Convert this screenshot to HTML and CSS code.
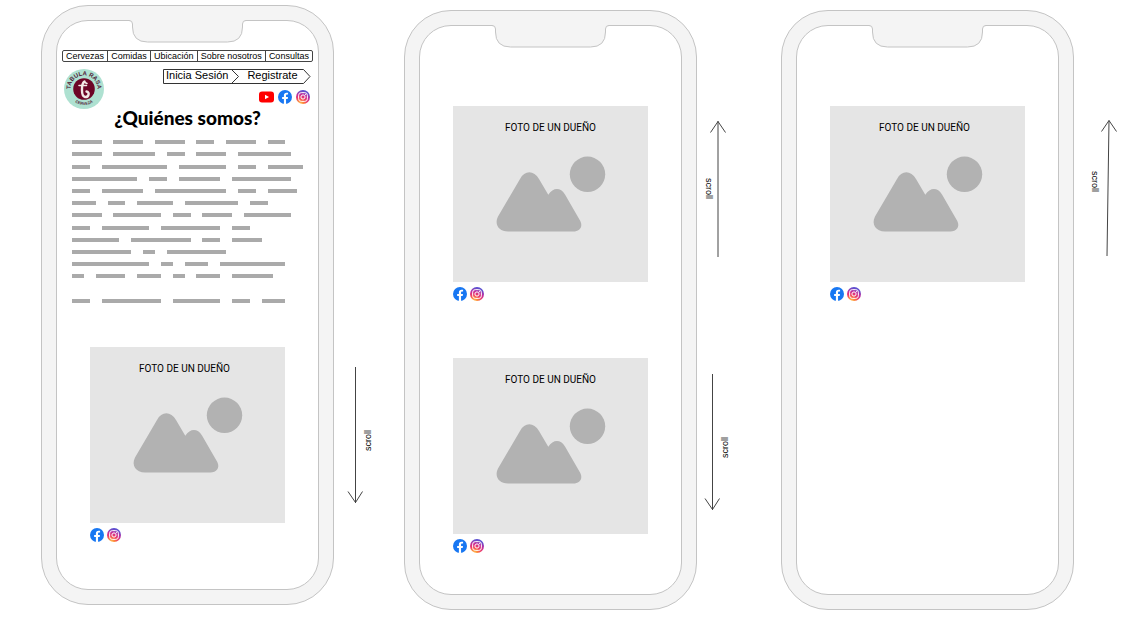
FILE: index.html
```html
<!DOCTYPE html>
<html lang="es">
<head>
<meta charset="utf-8">
<meta name="viewport" content="width=device-width, initial-scale=1">
<title>¿Quiénes somos? - Tabula Rasa</title>
<link rel="stylesheet" href="styles.css">
</head>
<body>
<svg class="sprite" aria-hidden="true">
  <defs>
    <radialGradient id="ig-warm" cx="0.3" cy="1.05" r="1">
      <stop offset="0" stop-color="#ffd860"/>
      <stop offset="0.25" stop-color="#fd8a3c"/>
      <stop offset="0.5" stop-color="#ee3b66"/>
      <stop offset="0.75" stop-color="#c32c9c"/>
      <stop offset="1" stop-color="#5b4fd0"/>
    </radialGradient>
    <symbol id="facebook" viewBox="0 0 24 24">
      <circle cx="12" cy="12" r="12" fill="#1877f2"/>
      <path fill="#fff" d="M10.1 24v-8.400H7.100V12h3V9.400c0-3 1.800-4.700 4.500-4.700 1.300 0 2.700.2 2.700.2v3h-1.500c-1.500 0-2 .9-2 1.900V12h3.300l-.5 3.600h-2.800V24z"/>
    </symbol>
    <symbol id="instagram" viewBox="0 0 24 24">
      <circle cx="12" cy="12" r="12" fill="url(#ig-warm)"/>
      <rect x="4.500" y="4.500" width="15" height="15" rx="4.500" fill="none" stroke="#fff" stroke-width="1.700"/>
      <circle cx="12" cy="12" r="3.600" fill="none" stroke="#fff" stroke-width="1.700"/>
      <circle cx="16.200" cy="7.900" r="1" fill="#fff"/>
    </symbol>
    <symbol id="youtube" viewBox="0 0 30 22">
      <rect width="30" height="22" rx="6" fill="#f00"/>
      <path fill="#fff" d="M12 6.500v9l8-4.500z"/>
    </symbol>
    <symbol id="notch" viewBox="0 0 117 23">
      <path fill="#f4f4f4" d="M0 0v.5q3.500 0 3.500 3.500v3q0 15 15 15h80q15 0 15-15V4q0-3.500 3.500-3.500V0z"/>
      <path fill="none" stroke="#c4c4c4" d="M0 .5q3.500 0 3.500 3.500v3q0 15 15 15h80q15 0 15-15V4q0-3.500 3.500-3.500"/>
    </symbol>
    <symbol id="landscape" viewBox="0 26 195 150">
      <circle cx="134.500" cy="68.300" r="17.700" fill="#b2b2b2"/>
      <path fill="#b2b2b2" d="M45 110.500 67 73C71.500 64 81 64 86 73l9.300 15.700C100 81.500 107.500 81 112 88.500l15.300 26.500c3 6-1 10.500-7 10.500H55c-9 0-14-7-10-15z"/>
    </symbol>
    <symbol id="arrow-up" viewBox="0 0 16 138">
      <path fill="none" stroke="#444" d="M8 1v136M.5 12.500 8 1.500l7.500 11"/>
    </symbol>
    <symbol id="arrow-down" viewBox="0 0 16 138">
      <path fill="none" stroke="#444" d="M8.500 1v136M1 125.500l7.500 11 7-11"/>
    </symbol>
    <symbol id="arrow-up-tilted" viewBox="0 0 16 138">
      <path fill="none" stroke="#444" d="M6 137 8 1.500M.5 12.500 8 1.500l7.500 11"/>
    </symbol>
  </defs>
</svg>

<main class="board">
  <section class="phone phone--first">
    <svg class="notch" aria-hidden="true"><use href="#notch"/></svg>
    <div class="screen">
      <nav class="menu" aria-label="Principal">
        <a href="#cervezas">Cervezas</a>
        <a href="#comidas">Comidas</a>
        <a href="#ubicacion">Ubicación</a>
        <a href="#nosotros">Sobre nosotros</a>
        <a href="#consultas">Consultas</a>
      </nav>
      <header class="header">
        <svg class="logo" viewBox="0 0 40 40" role="img" aria-label="Tabula Rasa Cerveza">
          <defs>
            <path id="logo-top" d="M7.500 25A13.500 13.500 0 1 1 32.500 25"/>
            <path id="logo-bottom" d="M5 25.500A16 16 0 0 0 35 25.500"/>
          </defs>
          <circle cx="20" cy="20" r="20" fill="#aee1d1"/>
          <circle cx="20" cy="20" r="10.800" fill="#6d0526"/>
          <text class="logo__name"><textPath href="#logo-top" startOffset="50%">TABULA RASA</textPath></text>
          <text class="logo__kind"><textPath href="#logo-bottom" startOffset="50%">CERVEZA</textPath></text>
          <path fill="none" stroke="#f3e9e6" stroke-width="2.400" stroke-linecap="round" d="M20.500 12.500c-3 2-2.500 6-2.500 9 0 4 1 6 3 6.500 4 .5 5-5 1.500-5.500"/>
          <path fill="none" stroke="#f3e9e6" stroke-width="1.600" stroke-linecap="round" d="M15 16.500h7.500M20 13l3 1.500"/>
        </svg>
        <div class="header__side">
          <div class="account">
            <svg class="account__frame" viewBox="0 0 148 15" aria-hidden="true">
              <path fill="none" stroke="#333" d="M.5.500H140.500L147 7.500l-6.500 7H.5zM68.500.500 75.500 7.500l-7 7"/>
            </svg>
            <a href="#sesion">Inicia Sesión</a>
            <a href="#registro">Registrate</a>
          </div>
          <div class="social">
            <a href="#youtube" aria-label="YouTube"><svg class="icon icon--wide"><use href="#youtube"/></svg></a>
            <a href="#facebook" aria-label="Facebook"><svg class="icon"><use href="#facebook"/></svg></a>
            <a href="#instagram" aria-label="Instagram"><svg class="icon"><use href="#instagram"/></svg></a>
          </div>
        </div>
      </header>
      <h1 class="title">¿Quiénes somos?</h1>
      <svg class="copy" viewBox="0 0 40 14" preserveAspectRatio="none" aria-hidden="true">
        <path d="M0 .5h5m2 0h5m2 0h5m2 0h3m2 0h5m2 0h3
          M0 1.500h5m2 0h7m2 0h3m2 0h5m2 0h9
          M0 2.500h3m2 0h11m2 0h8m2 0h3m2 0h6
          M0 3.500h11m2 0h3m2 0h7m2 0h10
          M0 4.500h3m2 0h7m2 0h12m2 0h3m2 0h5
          M0 5.500h4m2 0h3m2 0h6m2 0h9m2 0h3
          M0 6.500h5m2 0h8m2 0h3m2 0h5m2 0h8
          M0 7.500h3m2 0h8m2 0h10m2 0h3
          M0 8.500h8m2 0h10m2 0h3m2 0h5
          M0 9.500h10m2 0h2m2 0h10
          M0 10.500h13m2 0h2m2 0h4m2 0h11
          M0 11.500h2m2 0h5m2 0h4m2 0h2m2 0h4m2 0h7
          M0 13.500h3m2 0h10m2 0h8m2 0h3m2 0h4"/>
      </svg>
      <article class="owner">
        <figure class="photo">
          <figcaption>FOTO DE UN DUEÑO</figcaption>
          <svg viewBox="0 0 195 148" aria-hidden="true"><use href="#landscape" y="-2" width="195" height="150"/></svg>
        </figure>
        <div class="social">
          <a href="#facebook" aria-label="Facebook"><svg class="icon"><use href="#facebook"/></svg></a>
          <a href="#instagram" aria-label="Instagram"><svg class="icon"><use href="#instagram"/></svg></a>
        </div>
      </article>
    </div>
  </section>

  <aside class="gutter gutter--one">
    <div class="scroll scroll--down">
      <svg aria-hidden="true"><use href="#arrow-down"/></svg>
      <span>scroll</span>
    </div>
  </aside>

  <section class="phone">
    <svg class="notch" aria-hidden="true"><use href="#notch"/></svg>
    <div class="screen screen--photos">
      <article class="owner">
        <figure class="photo photo--centered">
          <figcaption>FOTO DE UN DUEÑO</figcaption>
          <svg viewBox="0 0 195 148" aria-hidden="true"><use href="#landscape" y="-2" width="195" height="150"/></svg>
        </figure>
        <div class="social">
          <a href="#facebook" aria-label="Facebook"><svg class="icon"><use href="#facebook"/></svg></a>
          <a href="#instagram" aria-label="Instagram"><svg class="icon"><use href="#instagram"/></svg></a>
        </div>
      </article>
      <article class="owner">
        <figure class="photo photo--centered">
          <figcaption>FOTO DE UN DUEÑO</figcaption>
          <svg viewBox="0 0 195 148" aria-hidden="true"><use href="#landscape" y="-2" width="195" height="150"/></svg>
        </figure>
        <div class="social">
          <a href="#facebook" aria-label="Facebook"><svg class="icon"><use href="#facebook"/></svg></a>
          <a href="#instagram" aria-label="Instagram"><svg class="icon"><use href="#instagram"/></svg></a>
        </div>
      </article>
    </div>
  </section>

  <aside class="gutter gutter--two">
    <div class="scroll scroll--up">
      <span>scroll</span>
      <svg aria-hidden="true"><use href="#arrow-up"/></svg>
    </div>
    <div class="scroll scroll--down">
      <svg aria-hidden="true"><use href="#arrow-down"/></svg>
      <span>scroll</span>
    </div>
  </aside>

  <section class="phone">
    <svg class="notch" aria-hidden="true"><use href="#notch"/></svg>
    <div class="screen screen--photos">
      <article class="owner">
        <figure class="photo">
          <figcaption>FOTO DE UN DUEÑO</figcaption>
          <svg viewBox="0 0 195 148" aria-hidden="true"><use href="#landscape" y="-2" width="195" height="150"/></svg>
        </figure>
        <div class="social">
          <a href="#facebook" aria-label="Facebook"><svg class="icon"><use href="#facebook"/></svg></a>
          <a href="#instagram" aria-label="Instagram"><svg class="icon"><use href="#instagram"/></svg></a>
        </div>
      </article>
    </div>
  </section>

  <aside class="gutter gutter--three">
    <div class="scroll scroll--tilted">
      <span>scroll</span>
      <svg aria-hidden="true"><use href="#arrow-up-tilted"/></svg>
    </div>
  </aside>
</main>
</body>
</html>
```
FILE: styles.css
```css
* {
  box-sizing: border-box;
}

body {
  margin: 0;
  background: #fff;
  color: #000;
  font-family: "Liberation Sans", Arial, sans-serif;
}

a {
  color: inherit;
  text-decoration: none;
}

svg {
  display: block;
}

.sprite {
  position: absolute;
  width: 0;
  height: 0;
}

/* Phones and the gutters between them share the window width */
.board {
  display: grid;
  grid-template-columns: 293fr 70fr 293fr 84fr 293fr 66fr;
  align-items: start;
  padding: 10px 0 20px 41px;
}

.phone {
  position: relative;
  display: flex;
  min-height: 600px;
  padding: 14px;
  border: 1px solid #c4c4c4;
  border-radius: 47px;
  background: #f4f4f4;
}

.phone--first {
  margin-top: -5px;
}

.notch {
  position: absolute;
  top: 14px;
  left: 50%;
  width: 117px;
  height: 23px;
  margin-left: -59px;
}

.screen {
  flex: 1;
  min-width: 0;
  padding: 29px 5px 0;
  border: 1px solid #c4c4c4;
  border-radius: 32px;
  background: #fff;
}

.screen--photos {
  padding-top: 80px;
}

/* Top menu */
.menu {
  display: flex;
  justify-content: space-between;
  border: 1px solid #444;
  border-radius: 2px;
  font-size: 9px;
  line-height: 10px;
}

.menu a {
  flex: 1 0 auto;
  text-align: center;
}

.menu a + a {
  border-left: 1px solid #444;
}

.header {
  display: flex;
  justify-content: space-between;
  padding: 7px 2px 0;
}

.logo {
  width: 40px;
  height: 40px;
}

.logo__name,
.logo__kind {
  fill: #53233a;
  font-weight: bold;
  text-anchor: middle;
}

.logo__name {
  font-size: 6px;
}

.logo__kind {
  font-size: 4px;
}

.account {
  position: relative;
  display: flex;
  gap: 19px;
  width: 148px;
  padding-left: 3px;
  font-size: 11px;
  line-height: 13px;
}

.account__frame {
  position: absolute;
  inset: 0;
  width: 148px;
  height: 15px;
}

.account a {
  position: relative;
}

.social {
  display: flex;
  align-items: center;
  gap: 3px;
}

.header .social {
  justify-content: flex-end;
  gap: 4px;
  padding: 8px 1px 0 0;
}

.icon {
  width: 14px;
  height: 14px;
}

.icon--wide {
  width: 15px;
}

.title {
  margin: 0;
  font-family: Lato, "Open Sans", sans-serif;
  font-size: 19px;
  font-weight: 900;
  line-height: 18px;
  text-align: center;
}

/* Placeholder paragraph: one unit per character, one row per line */
.copy {
  width: calc(100% - 14px);
  height: 171px;
  margin: 9px 0 40px 10px;
}

.copy path {
  fill: none;
  stroke: #aaa;
  stroke-width: 4px;
  vector-effect: non-scaling-stroke;
  shape-rendering: crispEdges;
}

/* Owner photo cards */
.owner {
  margin: 0 28px;
}

.owner + .owner {
  margin-top: 57px;
}

.photo {
  margin: 0 0 5px;
  padding-top: 16px;
  background: #e5e5e5;
}

.photo figcaption {
  padding-right: 6px;
  font-family: Roboto, "Liberation Sans", sans-serif;
  font-size: 10px;
  line-height: 12px;
  text-align: center;
}

.photo--centered figcaption {
  padding-right: 0;
}

.photo svg {
  width: 100%;
}

/* Scroll hints */
.gutter {
  display: flex;
  flex-direction: column;
}

.gutter--one {
  padding: 356px 0 0 13px;
}

.gutter--two {
  gap: 115px;
  padding: 110px 0 0 7px;
}

.gutter--three {
  padding: 109px 0 0 16px;
}

.scroll {
  display: flex;
  align-items: center;
  font-size: 9px;
  line-height: 10px;
}

.scroll svg {
  flex: none;
  width: 16px;
  height: 138px;
}

.scroll span {
  writing-mode: vertical-rl;
}

.scroll--up span {
  margin-right: -4px;
}

.scroll--down span {
  padding-bottom: 12px;
  transform: rotate(180deg);
}

.scroll--tilted {
  gap: 1px;
}

.scroll--tilted span {
  padding-bottom: 12px;
}
```
